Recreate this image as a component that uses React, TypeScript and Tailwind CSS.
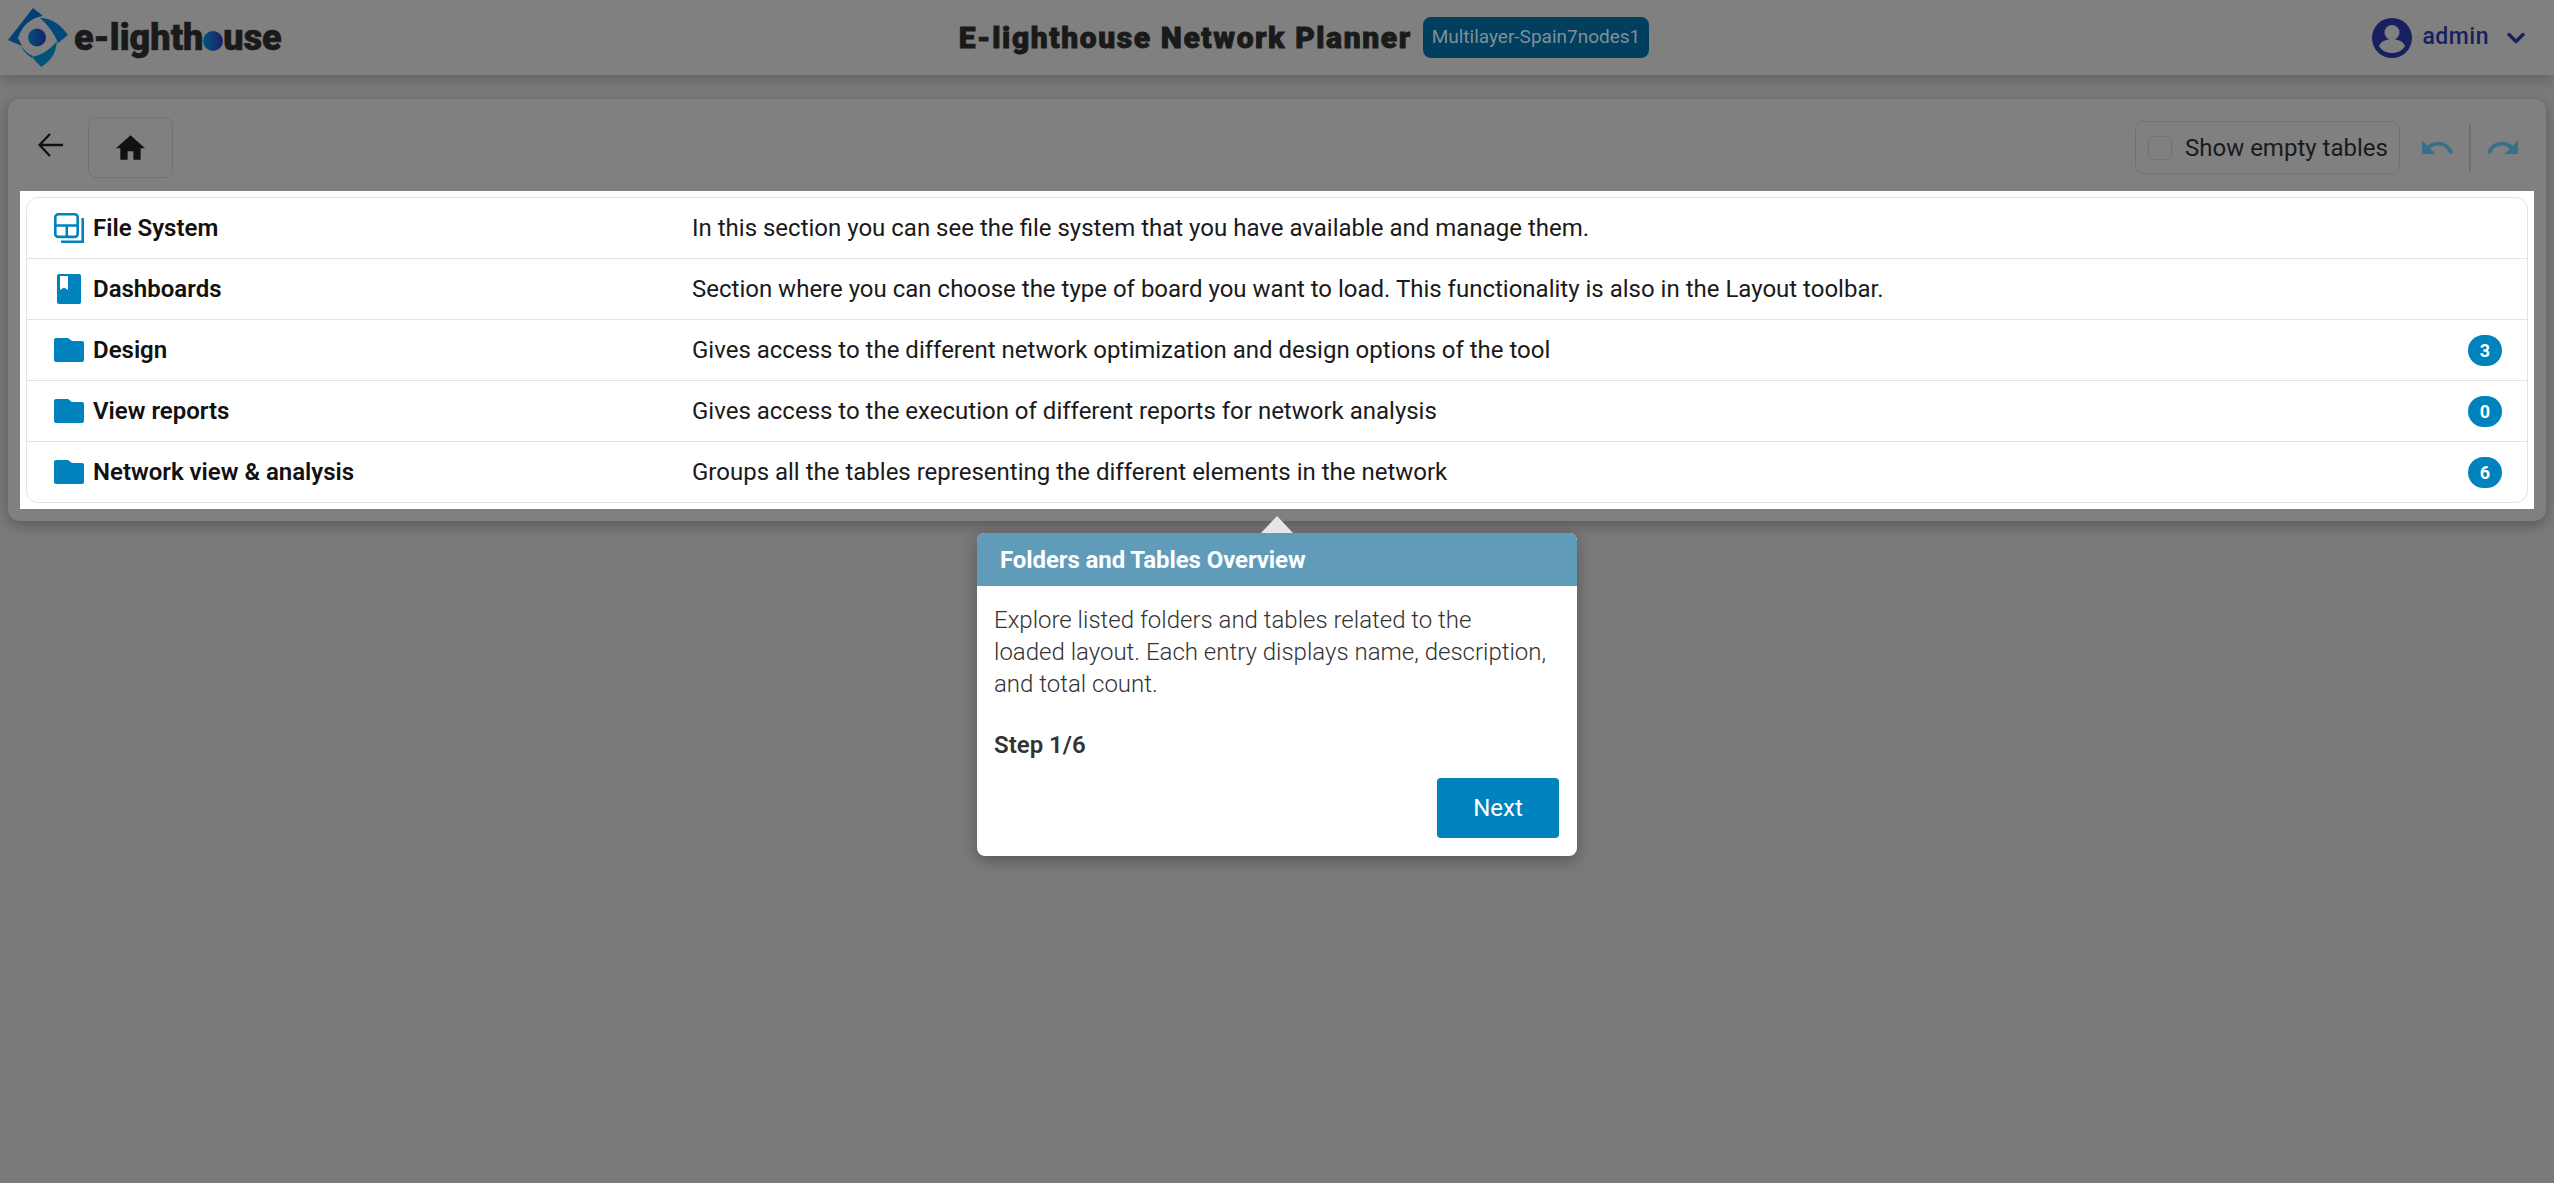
import { ChevronDown } from "lucide-react";

const rows = [
  { name: "File System", desc: "In this section you can see the file system that you have available and manage them.", icon: "fs" },
  { name: "Dashboards", desc: "Section where you can choose the type of board you want to load. This functionality is also in the Layout toolbar.", icon: "book" },
  { name: "Design", desc: "Gives access to the different network optimization and design options of the tool", icon: "folder", count: 3 },
  { name: "View reports", desc: "Gives access to the execution of different reports for network analysis", icon: "folder", count: 0 },
  { name: "Network view & analysis", desc: "Groups all the tables representing the different elements in the network", icon: "folder", count: 6 },
];

function RowIcon({ kind }: { kind: string }) {
  if (kind === "fs") {
    return (
      <svg width="30" height="30" viewBox="0 0 30 30" fill="none" stroke="#0083bd" strokeWidth="2.6">
        <rect x="1.3" y="1.3" width="22.4" height="22.6" rx="3" />
        <path d="M1.3 12.5h22.4M12.8 12.5v11.4" />
        <path d="M28.7 5v23.7H7" />
      </svg>
    );
  }
  if (kind === "book") {
    return (
      <svg width="30" height="30" viewBox="0 0 30 30">
        <path d="M3 2a2 2 0 0 1 2-2h20a2 2 0 0 1 2 2v26a2 2 0 0 1-2 2H5a2 2 0 0 1-2-2z" fill="#0083bd" />
        <path d="M6 2h8v14l-4-2.5L6 16z" fill="#fff" />
      </svg>
    );
  }
  return (
    <svg width="30" height="30" viewBox="0 0 30 30">
      <path d="M0 5a2 2 0 0 1 2-2h12l4 3h10a2 2 0 0 1 2 2v17a2 2 0 0 1-2 2H2a2 2 0 0 1-2-2z" fill="#0083bd" />
    </svg>
  );
}

function Logo() {
  return (
    <svg width="68" height="68" viewBox="4 4 68 68">
      <defs>
        <linearGradient id="lg" x1="0" x2="1">
          <stop offset="0" stopColor="#00527a" />
          <stop offset="1" stopColor="#16206a" />
        </linearGradient>
      </defs>
      {/* top left blade */}
      <path d="M8 40 33 8l10 8C30 18 22 26 18 38l4 8z" fill="#043f78" />
      {/* right blade */}
      <path d="M40 18c12 0 21 7 28 17l-10 8C54 33 48 25 40 18z" fill="#04477a" />
      {/* bottom blade */}
      <path d="M57 41c-1 9-3 18-16 26l-9-10c10-2 19-8 25-16z" fill="#00527a" />
      <path d="M21 46c3 4 7 8 12 10l-1 2c-5-3-9-7-11-12z" fill="#00527a" />
      <circle cx="37" cy="37.5" r="9" fill="url(#lg)" />
    </svg>
  );
}

export default function App() {
  return (
    <div className="min-h-screen bg-[#7a7a7a] font-['Roboto',sans-serif] text-[#111]">
      <header className="h-[75px] bg-[#808080] flex items-center justify-between pl-[4px] pr-[28px] shadow-[0_4px_14px_rgba(0,0,0,0.22)] relative">
        <div className="flex items-center w-[478px]">
          <Logo />
          <span className="ml-[2px] text-[36px] font-black text-[#1a1a1a] flex items-center leading-none [-webkit-text-stroke:0.6px_#1a1a1a]">
            e-lighth
            <span className="inline-block w-[20px] h-[20px] rounded-full bg-gradient-to-r from-[#00527a] to-[#16206a] mt-[7px]" />
            use
          </span>
        </div>
        <div className="flex items-center gap-[11px]">
          <span className="text-[30px] font-black text-[#1a1a1a] tracking-[1.6px] [-webkit-text-stroke:0.9px_#1a1a1a]">E-lighthouse Network Planner</span>
          <span className="h-[41px] px-[9px] rounded-lg bg-[#003f5e] text-[#7f8f98] text-[19px] flex items-center">Multilayer-Spain7nodes1</span>
        </div>
        <div className="w-[400px] flex items-center justify-end text-[#18205f]">
          <svg width="40" height="40" viewBox="0 0 40 40">
            <circle cx="20" cy="20" r="20" fill="#18205f" />
            <circle cx="20" cy="14.5" r="7.5" fill="#808080" />
            <path d="M7 28c2-5 8-7 13-7s11 2 13 7c-3 5-8 7-13 7s-10-2-13-7z" fill="#808080" />
          </svg>
          <span className="ml-[10px] text-[23px] font-medium tracking-[0.5px]">admin</span>
          <ChevronDown className="ml-[13px] mr-[-4px] w-[28px] h-[28px]" strokeWidth={3} />
        </div>
      </header>

      <main className="px-2 pt-6">
        <section className="bg-[#808080] rounded-xl shadow-[0_4px_14px_rgba(0,0,0,0.28)] pb-3 px-3">
          <div className="flex items-start justify-between h-[92px] pt-[18px] pr-[16px]">
            <div className="flex items-center">
              <button className="ml-[6px] w-[49px] h-[59px] rounded-lg flex items-center justify-center pb-[6px]">
                <svg width="26" height="24" viewBox="0 0 26 24" fill="none" stroke="#111" strokeWidth="2.3">
                  <path d="M25 12H2M12 1 1.5 12 12 23" />
                </svg>
              </button>
              <button className="ml-[13px] w-[85px] h-[61px] rounded-lg border border-[#737373] flex items-center justify-center">
                <svg width="29" height="25" viewBox="2 3 20 17" fill="#111">
                  <path d="M10 20v-6h4v6h5v-8h3L12 3 2 12h3v8z" />
                </svg>
              </button>
            </div>
            <div className="flex items-center mt-[4px]">
              <div className="h-[53px] w-[265px] rounded-lg border border-[#737373] flex items-center pl-[12px]">
                <span className="w-[24px] h-[24px] rounded-md border border-[#737373]" />
                <span className="ml-[13px] text-[24px] text-[#1a1a1a]">Show empty tables</span>
              </div>
              <svg className="ml-[22px]" width="31" height="15" viewBox="2 7 20.4 9.5" fill="#36708b">
                <path d="M12.5 8c-2.65 0-5.05.99-6.9 2.6L2 7v9h9l-3.62-3.62c1.39-1.16 3.16-1.88 5.12-1.88 3.54 0 6.55 2.31 7.6 5.5l2.37-.78C21.08 11.03 17.15 8 12.5 8z" />
              </svg>
              <span className="ml-[16px] mr-[16px] w-[2px] h-[48px] bg-[#707070]" />
              <svg width="31" height="15" viewBox="1.5 7 20.5 9.5" fill="#36708b">
                <path d="M18.4 10.6C16.55 8.99 14.15 8 11.5 8c-4.65 0-8.58 3.03-9.96 7.22L3.9 16c1.05-3.19 4.05-5.5 7.6-5.5 1.95 0 3.73.72 5.12 1.88L13 16h9V7l-3.6 3.6z" />
              </svg>
            </div>
          </div>
          <div className="bg-white p-[6px]">
            <div className="border border-[#e2e2ea] rounded-xl">
              {rows.map((r, i) => (
                <div key={r.name} className={`flex items-center pl-[27px] pr-[25px] ${i < 4 ? "h-[61px] border-b border-[#e2e2ea]" : "h-[60px]"}`}>
                  <RowIcon kind={r.icon} />
                  <span className="ml-[9px] w-[599px] text-[24px] font-semibold text-[#111]">{r.name}</span>
                  <span className="flex-1 text-[24px] text-[#1a1a1a]">{r.desc}</span>
                  {r.count !== undefined && (
                    <span className="w-[34px] h-[31px] rounded-full bg-[#0083bd] text-white text-[18px] font-bold flex items-center justify-center">{r.count}</span>
                  )}
                </div>
              ))}
            </div>
          </div>
        </section>

        <div className="relative w-[600px] mt-3 ml-[969px] bg-white rounded-lg shadow-[0_4px_16px_rgba(0,0,0,0.3)]">
          <span className="absolute left-[284px] top-[-17px] w-0 h-0 border-x-[16px] border-x-transparent border-b-[17px] border-b-[#e6e6e6]" />
          <div className="h-[53px] bg-[#609cba] rounded-t-lg flex items-center pl-[23px] text-white text-[24px] font-bold tracking-[-0.1px]">
            Folders and Tables Overview
          </div>
          <div className="pt-[18px] pb-[18px] pl-[17px] pr-[18px] text-[24px] leading-[32px] font-light text-[#333]">
            <p className="whitespace-nowrap">
              Explore listed folders and tables related to the
              <br />
              loaded layout. Each entry displays name, description,
              <br />
              and total count.
            </p>
            <p className="mt-[29px] font-semibold">Step 1/6</p>
            <div className="flex justify-end mt-[17px]">
              <button className="w-[122px] h-[60px] rounded bg-[#0083bd] text-white text-[24px] font-normal">Next</button>
            </div>
          </div>
        </div>
      </main>
    </div>
  );
}
